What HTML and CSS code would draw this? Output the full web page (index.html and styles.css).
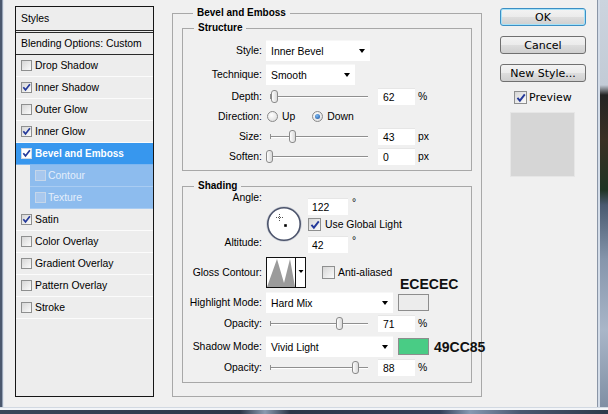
FILE: index.html
```html
<!DOCTYPE html>
<html lang="en">
<head>
<meta charset="utf-8">
<title>Layer Style</title>
<link rel="stylesheet" href="styles.css">
</head>
<body>
<div class="screen">
  <div class="dialog">
    <div class="frame-l"></div>
    <div class="content">
      <aside class="styles-panel">
        <div class="sp-head">Styles</div>
        <div class="sp-blend">Blending Options: Custom</div>
        <ul class="sp-list">
          <li class="sp-item"><span class="cb"></span>Drop Shadow</li>
          <li class="sp-item"><span class="cb"><svg viewBox="0 0 9 9"><path d="M1.3 4.3l2.2 2.6L7.9 1.2"/></svg></span>Inner Shadow</li>
          <li class="sp-item"><span class="cb"></span>Outer Glow</li>
          <li class="sp-item"><span class="cb"><svg viewBox="0 0 9 9"><path d="M1.3 4.3l2.2 2.6L7.9 1.2"/></svg></span>Inner Glow</li>
          <li class="sp-item active"><span class="cb"><svg viewBox="0 0 9 9"><path d="M1.3 4.3l2.2 2.6L7.9 1.2"/></svg></span>Bevel and Emboss</li>
          <li class="sp-item sub"><span class="cb"></span>Contour</li>
          <li class="sp-item sub"><span class="cb"></span>Texture</li>
          <li class="sp-item"><span class="cb"><svg viewBox="0 0 9 9"><path d="M1.3 4.3l2.2 2.6L7.9 1.2"/></svg></span>Satin</li>
          <li class="sp-item"><span class="cb"></span>Color Overlay</li>
          <li class="sp-item"><span class="cb"></span>Gradient Overlay</li>
          <li class="sp-item"><span class="cb"></span>Pattern Overlay</li>
          <li class="sp-item"><span class="cb"></span>Stroke</li>
        </ul>
      </aside>

      <main class="settings">
        <fieldset class="group outer">
          <legend>Bevel and Emboss</legend>

          <fieldset class="group structure">
            <legend>Structure</legend>
            <div class="row">
              <span class="lbl">Style:</span>
              <div class="select w-style"><span>Inner Bevel</span><i class="arrow"></i></div>
            </div>
            <div class="row mt3">
              <span class="lbl">Technique:</span>
              <div class="select w-tech"><span>Smooth</span><i class="arrow"></i></div>
            </div>
            <div class="row short mt1">
              <span class="lbl">Depth:</span>
              <div class="slider"><span class="thumb" style="left:5%"></span></div>
              <span class="num">62</span><span class="unit">%</span>
            </div>
            <div class="row short">
              <span class="lbl">Direction:</span>
              <label class="radio-opt"><span class="rb"></span>Up</label>
              <label class="radio-opt second"><span class="rb on"></span>Down</label>
            </div>
            <div class="row short">
              <span class="lbl">Size:</span>
              <div class="slider"><span class="thumb" style="left:23%"></span></div>
              <span class="num">43</span><span class="unit">px</span>
            </div>
            <div class="row short">
              <span class="lbl">Soften:</span>
              <div class="slider"><span class="thumb" style="left:0%"></span></div>
              <span class="num">0</span><span class="unit">px</span>
            </div>
          </fieldset>

          <fieldset class="group shading">
            <legend>Shading</legend>
            <div class="angle-block">
              <div class="ab-labels"><span>Angle:</span><span>Altitude:</span></div>
              <svg class="dial" viewBox="0 0 36 36" width="36" height="36">
                <circle cx="18" cy="18" r="17.3" fill="none" stroke="#cdd0d8" stroke-width="1"/>
                <circle cx="18" cy="18" r="16.2" fill="#fff" stroke="#4b536b" stroke-width="1.6"/>
                <path d="M13.5 8v7M10 11.5h7" stroke="#555" stroke-width="1" stroke-dasharray="1 1"/>
                <rect x="18.2" y="18.2" width="2.6" height="2.6" fill="#000"/>
              </svg>
              <div class="ab-fields">
                <div class="field-line"><span class="num wide">122</span><span class="deg">°</span></div>
                <label class="check-line"><span class="cb lg"><svg viewBox="0 0 9 9"><path d="M1.3 4.3l2.2 2.6L7.9 1.2"/></svg></span>Use Global Light</label>
                <div class="field-line mt5"><span class="num wide">42</span><span class="deg">°</span></div>
              </div>
            </div>

            <div class="row gloss">
              <span class="lbl">Gloss Contour:</span>
              <svg class="contour" viewBox="0 0 40 31" width="40" height="31">
                <rect x="0.5" y="0.5" width="39" height="30" fill="#fff" stroke="#111"/>
                <polygon points="1,30 11,2 18,26 24,2 29,30" fill="#9b9b9b"/>
                <path d="M29.5 1v29" stroke="#111"/>
                <path d="M32.5 13h5l-2.5 3z" fill="#000"/>
              </svg>
              <label class="check-line anti"><span class="cb lg"></span>Anti-aliased</label>
              <span class="note up">ECECEC</span>
            </div>

            <div class="row mt4">
              <span class="lbl">Highlight Mode:</span>
              <div class="select w-mode"><span>Hard Mix</span><i class="arrow"></i></div>
              <span class="swatch" style="background:#ececec"></span>
            </div>
            <div class="row">
              <span class="lbl">Opacity:</span>
              <div class="slider"><span class="thumb" style="left:71%"></span></div>
              <span class="num">71</span><span class="unit">%</span>
            </div>
            <div class="row mt2">
              <span class="lbl">Shadow Mode:</span>
              <div class="select w-mode"><span>Vivid Light</span><i class="arrow"></i></div>
              <span class="swatch" style="background:#49cc85"></span>
              <span class="note">49CC85</span>
            </div>
            <div class="row">
              <span class="lbl">Opacity:</span>
              <div class="slider"><span class="thumb" style="left:88%"></span></div>
              <span class="num">88</span><span class="unit">%</span>
            </div>
          </fieldset>
        </fieldset>
      </main>

      <div class="actions">
        <button class="btn default" type="button">OK</button>
        <button class="btn" type="button">Cancel</button>
        <button class="btn" type="button">New Style...</button>
        <label class="preview-check"><span class="cb lg"><svg viewBox="0 0 9 9"><path d="M1.3 4.3l2.2 2.6L7.9 1.2"/></svg></span>Preview</label>
        <div class="preview-box"></div>
      </div>
    </div>
    <div class="frame-r"></div>
  </div>
  <div class="frame-b"></div>
</div>
</body>
</html>
```

FILE: styles.css
```css
* { box-sizing: border-box; }
html, body { margin: 0; padding: 0; }
body {
  width: 608px;
  height: 414px;
  overflow: hidden;
  background: #f0f0f0;
  font-family: "Liberation Sans", Arial, sans-serif;
  font-size: 10.4px;
  color: #000;
}
.screen { display: flex; flex-direction: column; width: 608px; height: 414px; }
.dialog { display: flex; height: 407px; }
.frame-l {
  width: 4px;
  background: linear-gradient(to right, #4b586e 0 2px, #97a3b5 2px 3px, #e0e5ec 3px);
}
.frame-r {
  width: 11px;
  background:
    linear-gradient(to right, #8a95a6 0 1px, #d3dce8 1px 3px, transparent 3px),
    linear-gradient(to bottom, #ccd4de 0, #c2cbd6 85px, #232323 95px, #3a3024 140px, #1f3424 190px, #4a5a70 205px, #8696ac 260px, #a9b6c8 330px, #7c8ba0 414px);
}
.frame-b {
  height: 7px;
  background:
    linear-gradient(to bottom, #d2d9e2 0 1px, #f3f5f8 1px 3px, transparent 3px),
    linear-gradient(to right, #3a465a 0, #2c3648 240px, #8a9ab0 265px, #2c3648 290px, #34405a 440px, #8799b2 470px, #4a5870 520px, #2e394b 608px);
}
.content {
  flex: 1;
  display: flex;
  align-items: flex-start;
  padding: 6px 0 0 11px;
}

/* Styles list */
.styles-panel {
  width: 139px;
  height: 391px;
  border: 1px solid #161616;
  background: #ededed;
  flex: none;
}
.sp-head {
  height: 26px;
  line-height: 23px;
  padding-left: 5px;
  border-bottom: 3px double #2a2a2a;
}
.sp-blend {
  height: 22px;
  line-height: 21px;
  padding-left: 5px;
  border-bottom: 1px solid #2a2a2a;
}
.sp-list { list-style: none; margin: 0; padding: 0; }
.sp-item {
  height: 22px;
  display: flex;
  align-items: center;
  gap: 3px;
  padding-left: 5px;
  border-bottom: 1px solid #fbfbfb;
}
.sp-item.active {
  background: #3797ee;
  color: #fff;
  font-weight: bold;
  font-size: 10px;
  border-bottom-color: #7db6f0;
}
.sp-item.sub {
  margin-left: 14px;
  background: #8dbcee;
  color: #e4eefb;
  gap: 2px;
  border-bottom-color: #a9ccf2;
}
.sp-item.sub .cb { border-color: #c5d6ea; background: #a8c8ee; }
.sp-item.active .cb { background: #fff; border-color: #d0d8e4; }

.cb {
  width: 11px;
  height: 11px;
  flex: none;
  display: inline-flex;
  align-items: center;
  justify-content: center;
  border: 1px solid #8e8f8f;
  background: linear-gradient(135deg, #d6d6d6, #fbfbfb);
}
.cb.lg { width: 13px; height: 13px; }
.cb svg { width: 9px; height: 9px; }
.cb.lg svg { width: 10px; height: 10px; }
.cb path { fill: none; stroke: #24399a; stroke-width: 1.7; }

/* Settings */
.settings { margin-left: 18px; margin-top: 1px; width: 310px; flex: none; }
.group {
  margin: 0;
  padding: 0;
  min-width: 0;
  border: 1px solid #a8a8a8;
}
.group > legend {
  margin-left: 11px;
  padding: 0 4px;
  font-weight: bold;
  font-size: 10px;
  line-height: 12px;
}
.outer { padding: 0 9px 13px; }
.structure { margin-top: 3px; padding: 6px 0 4px; }
.shading { margin-top: 9px; padding: 0 0 4px; }

.row { display: flex; align-items: center; height: 21px; white-space: nowrap; }
.row > * { flex: none; }
.row.short { height: 20px; }
.mt1 { margin-top: 1px; }
.mt2 { margin-top: 2px; }
.mt3 { margin-top: 3px; }
.mt4 { margin-top: 4px; }
.mt5 { margin-top: 5px; }
.lbl { width: 79px; text-align: right; }

.select {
  margin-left: 4px;
  height: 21px;
  background: #fff;
  display: flex;
  align-items: center;
  padding-left: 5px;
  border-top: 1px solid #f7f7f7;
}
.w-style { width: 104px; }
.w-tech { width: 89px; }
.w-mode { width: 127px; }
.arrow {
  margin-left: auto;
  margin-right: 5px;
  width: 0;
  height: 0;
  border-left: 3.5px solid transparent;
  border-right: 3.5px solid transparent;
  border-top: 4px solid #000;
}

.slider { position: relative; width: 98px; height: 13px; margin: 0 4px 0 8px; }
.slider::before {
  content: "";
  position: absolute;
  left: 0; right: 0; top: 6px;
  height: 1px;
  background: #8f8f8f;
  box-shadow: 0 1px 0 #fff;
}
.slider::after {
  content: "";
  position: absolute;
  left: 0; top: 4px;
  width: 1px; height: 5px;
  background: #8f8f8f;
}
.thumb {
  position: absolute;
  top: 0;
  width: 7px;
  height: 13px;
  margin-left: -4px;
  border: 1px solid #8a8a8a;
  border-radius: 3px;
  background: linear-gradient(to right, #fdfdfd, #d9d9d9);
  z-index: 1;
}
.num {
  width: 37px;
  height: 17px;
  margin-left: 6px;
  padding-left: 5px;
  line-height: 17px;
  background: #fff;
  border-top: 1px solid #e6e6e6;
  flex: none;
}
.num.wide { width: 40px; margin-left: 0; padding-left: 4px; }
.unit { margin-left: 3px; }

.radio-opt { display: inline-flex; align-items: center; gap: 4px; margin-left: 5px; }
.radio-opt.second { margin-left: 17px; }
.rb {
  width: 11px;
  height: 11px;
  border-radius: 50%;
  border: 1px solid #8a8a8a;
  background: radial-gradient(circle at 40% 35%, #fff, #d8d8d8);
  display: inline-flex;
  align-items: center;
  justify-content: center;
}
.rb.on::after {
  content: "";
  width: 5px;
  height: 5px;
  border-radius: 50%;
  background: radial-gradient(circle at 40% 35%, #7cbaf2, #1a4f9c);
}

.angle-block { display: flex; height: 62px; }
.ab-labels {
  width: 79px;
  display: flex;
  flex-direction: column;
  justify-content: space-between;
  align-items: flex-end;
  line-height: 12px;
  padding-bottom: 5px;
}
.dial { margin-left: 4px; margin-top: 14px; flex: none; }
.ab-fields { margin-left: 6px; padding-top: 6px; display: flex; flex-direction: column; white-space: nowrap; }
.field-line { display: flex; align-items: flex-start; height: 17px; }
.deg { margin-left: 4px; line-height: 10px; }
.check-line { display: flex; align-items: center; gap: 4px; height: 13px; margin-top: 3px; }

.row.gloss { height: 31px; margin-top: 3px; }
.contour { margin-left: 4px; }
.check-line.anti { margin: 0 0 0 16px; width: 78px; gap: 3px; }
.note {
  font-weight: bold;
  font-size: 14px;
  line-height: 14px;
  margin-left: 5px;
  color: #111;
}
.note.up { align-self: flex-end; margin: 0 0 -3px 0; }

.swatch {
  width: 31px;
  height: 17px;
  margin-left: 5px;
  border: 1px solid #8d8d8d;
}

/* Right column */
.actions {
  margin-left: 18px;
  margin-top: 2px;
  width: 86px;
  flex: none;
  display: flex;
  flex-direction: column;
  font-family: "DejaVu Sans", Verdana, sans-serif;
  font-size: 11px;
}
.btn {
  width: 86px;
  height: 18px;
  padding: 0;
  border: 1px solid #707070;
  border-radius: 3px;
  background: linear-gradient(#f3f3f3 0, #ebebeb 50%, #dedede 50%, #cfcfcf 100%);
  font: inherit;
  color: #000;
  line-height: 15px;
}
.btn + .btn { margin-top: 10px; }
.btn.default {
  border-color: #3c8fc4;
  box-shadow: inset 0 0 0 1px #a6e2f8;
}
.preview-check {
  display: flex;
  align-items: center;
  gap: 2px;
  margin: 9px 0 0 14px;
  height: 13px;
}
.preview-box {
  margin: 8px 0 0 10px;
  width: 65px;
  height: 65px;
  background: #d6d6d6;
  border: 1px solid #e6e6e6;
}
```
